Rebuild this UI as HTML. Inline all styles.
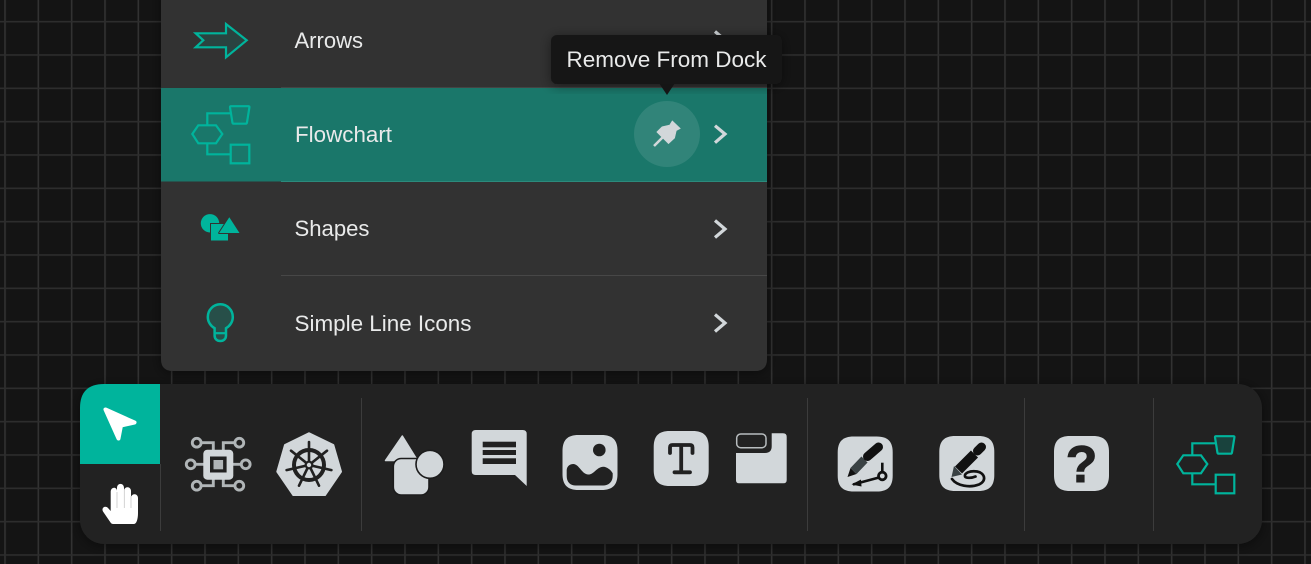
<!DOCTYPE html>
<html><head><meta charset="utf-8">
<style>
html,body{margin:0;padding:0;width:1311px;height:564px;overflow:hidden;background:#141414}
svg{display:block}
text{font-family:"Liberation Sans",sans-serif;fill:#e9eaea}
</style></head>
<body>
<svg width="1311" height="564" viewBox="0 0 1311 564" xmlns="http://www.w3.org/2000/svg">
<defs>
<pattern id="g" x="5" y="21.67" width="33.333" height="33.333" patternUnits="userSpaceOnUse" patternTransform="translate(-0.8 -0.8)">
<rect x="0" y="0" width="1.6" height="33.333" fill="#323232"/>
<rect x="0" y="0" width="33.333" height="1.6" fill="#2d2d2d"/>
</pattern>
<filter id="s" x="-10%" y="-20%" width="120%" height="140%"><feDropShadow dx="0" dy="2" stdDeviation="6" flood-color="#000" flood-opacity=".45"/></filter>
<path id="sq" d="M0 16C0 5 5 0 16 0H39C50 0 55 5 55 16V39C55 50 50 55 39 55H16C5 55 0 50 0 39Z"/>
<g id="flow" fill="none" stroke="#00b49c" stroke-width="2.2">
<path d="M192.3 134L198.3 125.3H216L222.3 134L216 143.3H198.3Z"/>
<path d="M207.3 125.3V113.3H230.7M207.3 143.3V154.3H230.7"/>
<rect x="230.7" y="144.7" width="18.6" height="18.6"/>
<path d="M231 106.2H248.6Q249.6 106.2 249.4 107.4L247 122.4Q246.8 123.7 245.6 123.7H233.8Q232.6 123.7 232.4 122.4L230 107.4Q229.9 106.2 231 106.2Z" fill="rgba(0,180,156,.12)"/>
</g>
</defs>
<rect width="1311" height="564" fill="#141414"/>
<rect width="1311" height="564" fill="url(#g)"/>

<!-- panel -->
<path d="M161 -10H767V359Q767 371 755 371H173Q161 371 161 359Z" fill="#323232" filter="url(#s)"/>
<rect x="161" y="88" width="606" height="93.5" fill="#1a776a"/>
<rect x="281" y="87" width="486" height="1" fill="#444"/>
<rect x="281" y="181" width="486" height="1" fill="#2c8a7c"/>
<rect x="281" y="275" width="486" height="1" fill="#474747"/>

<path d="M195.7 33.3H226V24L246.7 40.3L226 57.3V47.3H195.7L203.3 40.3Z" fill="rgba(0,180,156,.14)" stroke="#00b49c" stroke-width="2.2"/>
<use href="#flow"/>
<circle cx="210" cy="223.3" r="9.2" fill="#00b49c"/>
<rect x="211" y="224" width="17" height="17" fill="#00b49c" stroke="#323232" stroke-width="2"/>
<rect x="211" y="224" width="17" height="16.5" fill="#00b49c"/>
<path d="M229.3 217.3L239.5 233H219.1Z" fill="#00b49c" stroke="#323232" stroke-width="2" paint-order="stroke" stroke-linejoin="round"/>
<path d="M214.6 328.2C210.6 326 207.8 321.8 207.8 317C207.8 310 213.4 304.3 220.3 304.3C227.2 304.3 232.8 310 232.8 317C232.8 321.8 230 326 226 328.2V335.5C226 339 223.5 341 220.3 341C217.1 341 214.6 339 214.6 335.5Z" fill="rgba(0,180,156,.22)" stroke="#00b49c" stroke-width="2.5"/>
<path d="M214.6 333.2H226" stroke="#00b49c" stroke-width="2.2" fill="none"/>

<text x="294.5" y="48" font-size="22" textLength="68.5" lengthAdjust="spacingAndGlyphs">Arrows</text>
<text x="295" y="142" font-size="22" textLength="97" lengthAdjust="spacingAndGlyphs">Flowchart</text>
<text x="294.5" y="236" font-size="22" textLength="75" lengthAdjust="spacingAndGlyphs">Shapes</text>
<text x="294.5" y="331" font-size="22" textLength="177" lengthAdjust="spacingAndGlyphs">Simple Line Icons</text>

<g fill="none" stroke="#d2d7da" stroke-width="3.2">
<path d="M715 31.5L725 40L715 48.5"/>
<path d="M715 125.7L725 134L715 142.7"/>
<path d="M715 220.5L725 229L715 237.5"/>
<path d="M715 314.5L725 323L715 331.5"/>
</g>
<circle cx="667" cy="134" r="33" fill="rgba(255,255,255,.1)"/>
<path d="M672.3 120.8L680.3 128.5L676.3 130.6L674.6 138L668.5 143.7L656.8 132L662 126.8L669.6 125.1Z" fill="#d2d7da" stroke="#d2d7da" stroke-width=".6" stroke-linejoin="round"/>
<path d="M654 146L664 136" stroke="#d2d7da" stroke-width="2.6"/>

<!-- tooltip -->
<rect x="551" y="35" width="231" height="49" rx="6" fill="#151515" filter="url(#s)"/>
<path d="M659.5 83.8H674.5L667 95Z" fill="#151515"/>
<text x="566.5" y="67" font-size="22.5" textLength="200" lengthAdjust="spacingAndGlyphs">Remove From Dock</text>

<!-- dock -->
<rect x="80" y="384" width="1182" height="160" rx="24" fill="#212121" filter="url(#s)"/>
<path d="M160 384V464H80V408Q80 384 104 384Z" fill="#00b49c"/>
<g fill="#3c3c3c">
<rect x="160" y="464" width="1" height="67"/>
<rect x="361" y="398" width="1" height="133"/>
<rect x="807" y="398" width="1" height="133"/>
<rect x="1024" y="398" width="1" height="133"/>
<rect x="1153" y="398" width="1" height="133"/>
</g>

<!-- cursor -->
<path d="M105.5 409.5L134.5 422.5L121 425.5L118.5 438.5Z" fill="#fff" stroke="#fff" stroke-width="4" stroke-linejoin="round"/>
<!-- hand -->
<path d="M110.7 492C110.7 486.5 117 486.5 117 491V488C117 482.5 124 482.5 124 488V491C124 486 131 486 131 491V498C131 493 138 493 138 498V513C138 519 136.5 524 134 524H113C111.5 524 110.5 522.5 109.5 521L103 511.5C101 508 105 505 108 508L110.7 511Z" fill="#fff"/>
<path d="M117 492V508M124.3 490V508M131 496V508" stroke="#c8c8c8" stroke-width=".8"/>

<!-- circuit -->
<g fill="none" stroke="#b0b5b7" stroke-width="2.9">
<path d="M201.5 442.7H213.3V450M235 442.7H223.3V450M201.5 485.7H213.3V479M235 485.7H223.3V479M195.5 464.3H204M241 464.3H232"/>
<circle cx="196.7" cy="442.7" r="4.4"/><circle cx="239.3" cy="442.7" r="4.4"/>
<circle cx="190.7" cy="464.3" r="4.4"/><circle cx="245.7" cy="464.3" r="4.4"/>
<circle cx="196.7" cy="485.7" r="4.4"/><circle cx="239.3" cy="485.7" r="4.4"/>
</g>
<rect x="203.3" y="449.7" width="30" height="30" rx="4" fill="#d2d7da"/>
<rect x="210" y="456.5" width="16.6" height="16" fill="#212121"/>
<rect x="213.5" y="460" width="9.6" height="9.3" fill="#b0b5b7"/>

<!-- k8s -->
<path d="M309 433.3L333.3 445L341 471.7L325 495H293.3L277.3 471.7L285 445Z" fill="#d2d7da" stroke="#d2d7da" stroke-width="2" stroke-linejoin="round"/>
<g fill="none" stroke="#212121">
<circle cx="309" cy="465" r="15" stroke-width="4"/>
<g stroke-width="2.6" stroke-linecap="round">
<path d="M309 465V442"/><path d="M309 465L327 450.7"/><path d="M309 465L331.4 470.1"/><path d="M309 465L319 485.7"/><path d="M309 465L299 485.7"/><path d="M309 465L286.6 470.1"/><path d="M309 465L291 450.7"/>
</g>
</g>
<circle cx="309" cy="465" r="4.4" fill="#212121"/><circle cx="309" cy="465" r="2.2" fill="#d2d7da"/>

<!-- shapes -->
<path d="M402.3 436L417.5 460.5H385.5Z" fill="#d2d7da" stroke="#d2d7da" stroke-width="1.5" stroke-linejoin="round"/>
<rect x="393.3" y="458.5" width="35.7" height="36.5" rx="8" fill="#d2d7da" stroke="#1c1c1c" stroke-width="1.6"/>
<circle cx="430" cy="464.3" r="14" fill="#d2d7da" stroke="#1c1c1c" stroke-width="1.6"/>

<!-- comment -->
<path d="M475.7 430H522.7Q526.7 430 526.7 434V486L515 475H475.7Q471.7 475 471.7 471V434Q471.7 430 475.7 430Z" fill="#d2d7da"/>
<rect x="482.7" y="441.7" width="33.3" height="5.6" fill="#212121"/>
<rect x="482.7" y="450" width="33.3" height="5" fill="#212121"/>
<rect x="482.7" y="458.3" width="33.3" height="5.7" fill="#212121"/>

<!-- image -->
<use href="#sq" transform="translate(562.5 435)" fill="#d2d7da"/>
<circle cx="599.3" cy="450" r="6.3" fill="#212121"/>
<path d="M566.7 470C567 466 570 464 573.3 464C579 464 582 474.5 588.3 474.5C594 474.5 597 466.7 603.3 466.7C607 466.7 611 470 612.7 473.3V476C612.7 482 608.5 485.5 603 485.5H576C570 485.5 566.7 482 566.7 476Z" fill="#212121"/>

<!-- T -->
<use href="#sq" transform="translate(653.7 431)" fill="#d2d7da"/>
<path d="M670 453V447.5Q670 445 672.5 445H690Q692.5 445 692.5 447.5V453M681.2 445V472.3M674.5 472.3H690" fill="none" stroke="#212121" stroke-width="3.8" stroke-linecap="round"/>

<!-- form -->
<path d="M771.7 433.3H783Q786.7 433.3 786.7 437V480Q786.7 483.3 783.4 483.3H739Q736 483.3 736 480.3V453H765Q771.7 453 771.7 446.3Z" fill="#d2d7da"/>
<rect x="736.7" y="434" width="29.3" height="13.7" rx="4" fill="none" stroke="#b8bdbf" stroke-width="1.5"/>

<!-- pen vector -->
<use href="#sq" transform="translate(837.7 436.5)" fill="#d2d7da"/>
<path d="M847.5 477L850.5 468L856.5 474Z" fill="#111"/>
<path d="M853.5 471L864.5 459.5" stroke="#3a4244" stroke-width="8.5" fill="none"/>
<path d="M867.5 456.5L878.5 447" stroke="#111" stroke-width="9" stroke-linecap="round" fill="none"/>
<path d="M853 484.5L879 477.5" stroke="#111" stroke-width="2.6" fill="none"/>
<path d="M851.5 484.5L861 479.5L861.5 486.5Z" fill="#111"/>
<circle cx="882.3" cy="476" r="3.8" fill="#d2d7da" stroke="#111" stroke-width="2.8"/>
<path d="M882.3 462.7V472" stroke="#111" stroke-width="2.6"/>

<!-- pencil -->
<use href="#sq" transform="translate(939.3 436)" fill="#d2d7da"/>
<path d="M951.5 477L954 466L962 474.5Z" fill="#3a4244"/>
<path d="M958.5 470L974.5 454" stroke="#111" stroke-width="10" fill="none"/>
<path d="M977.5 451L981.5 447" stroke="#111" stroke-width="9" stroke-linecap="round" fill="none"/>
<path d="M952 479C957 486 970 488 979 484.5C987 481 985 473 977 471.5C970 470.5 964 473 965 476.5C966 478.5 972 478 975.5 476.5" fill="none" stroke="#111" stroke-width="2.7" stroke-linecap="round"/>

<!-- help -->
<use href="#sq" transform="translate(1054 436)" fill="#d2d7da"/>
<text x="1081.5" y="482" font-size="52" font-weight="700" text-anchor="middle" stroke="#212121" stroke-width="1" style="fill:#212121">?</text>

<!-- dock flow -->
<path d="M1216 436.2H1233.6Q1234.6 436.2 1234.4 437.4L1232 452.4Q1231.8 453.7 1230.6 453.7H1218.8Q1217.6 453.7 1217.4 452.4L1215 437.4Q1214.9 436.2 1216 436.2Z" fill="rgba(0,180,156,.12)"/>
<use href="#flow" transform="translate(985 330)"/>
</svg>
</body></html>
